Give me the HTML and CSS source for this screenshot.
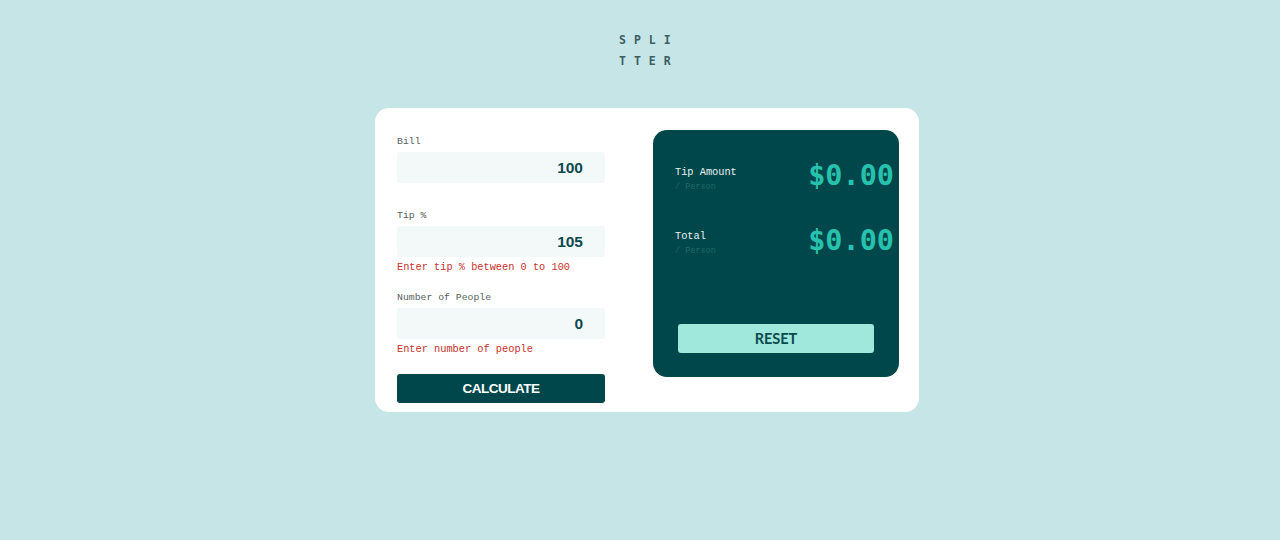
FILE: index.html
```html
<!DOCTYPE html>
<html lang="en">
<head>
<meta charset="utf-8">
<title>Splitter</title>
<link rel="stylesheet" href="styles.css">
</head>
<body>
<header class="header">
  <h1 class="logo">SPLITTER</h1>
</header>
<main class="main">
  <section class="card">
    <form class="inputs">
      <div class="field field-bill">
        <label class="label">Bill</label>
        <div class="input">100</div>
      </div>
      <div class="field field-tip">
        <label class="label">Tip %</label>
        <div class="input">105</div>
        <p class="error">Enter tip % between 0 to 100</p>
      </div>
      <div class="field field-people">
        <label class="label">Number of People</label>
        <div class="input">0</div>
        <p class="error">Enter number of people</p>
      </div>
      <button type="button" class="btn-calc">CALCULATE</button>
    </form>
    <div class="panel">
      <div class="row">
        <div class="row-label">
          <div class="row-title">Tip Amount</div>
          <div class="row-sub">/ Person</div>
        </div>
        <div class="amount">$0.00</div>
      </div>
      <div class="row row-total">
        <div class="row-label">
          <div class="row-title">Total</div>
          <div class="row-sub">/ Person</div>
        </div>
        <div class="amount">$0.00</div>
      </div>
      <button type="button" class="btn-reset">RESET</button>
    </div>
  </section>
</main>
</body>
</html>
```

FILE: styles.css
```css
* { box-sizing: border-box; }
html, body { margin: 0; padding: 0; }
body {
  background: #c5e5e6;
  width: 1280px;
  height: 540px;
  overflow: hidden;
  font-family: "Liberation Mono", "DejaVu Sans Mono", monospace;
}
.header {
  display: flex;
  justify-content: center;
  padding-top: 30px;
}
.logo {
  margin: 0;
  width: 86px;
  padding-left: 22px;
  font-family: "DejaVu Sans Mono", "Liberation Mono", monospace;
  font-weight: 700;
  font-size: 11.5px;
  line-height: 21px;
  letter-spacing: 8px;
  color: #3d5e61;
  word-break: break-all;
}
.main {
  display: flex;
  justify-content: center;
  padding-left: 14px;
  padding-top: 36px;
}
.card {
  width: 544px;
  height: 304px;
  background: #ffffff;
  border-radius: 14px;
  padding: 22px 20px 9px 22px;
  display: grid;
  grid-template-columns: 208px 246px;
  column-gap: 48px;
  align-items: start;
}
.inputs {
  margin: 0;
  padding-top: 4px;
  display: flex;
  flex-direction: column;
}
.field { display: flex; flex-direction: column; }
.field-tip { margin-top: 25px; }
.field-people { margin-top: 16px; }
.label {
  font-size: 9.8px;
  line-height: 16px;
  color: #555f60;
  margin-bottom: 2px;
}
.input {
  height: 31px;
  background: #f3f8f8;
  border-radius: 3px;
  text-align: right;
  padding-right: 22px;
  font-family: "Liberation Sans", Arial, sans-serif;
  font-weight: 700;
  font-size: 15.5px;
  line-height: 31px;
  color: #0d4a4e;
}
.error {
  margin: 3px 0 0;
  font-size: 10.3px;
  line-height: 14px;
  color: #c9302c;
}
.btn-calc {
  margin-top: 18px;
  height: 29px;
  width: 208px;
  border: 0;
  border-radius: 3px;
  background: #00474b;
  color: #ffffff;
  font-family: "Liberation Sans", Arial, sans-serif;
  font-weight: 700;
  font-size: 13.5px;
  letter-spacing: -0.5px;
  padding: 0;
}
.panel {
  height: 247px;
  background: #00474b;
  border-radius: 14px;
  padding: 30px 5px 0 22px;
  display: flex;
  flex-direction: column;
}
.row {
  display: flex;
  justify-content: space-between;
  align-items: flex-start;
}
.row-total { margin-top: 32px; }
.row-label { padding-top: 5px; }
.row-total .row-label { padding-top: 4px; }
.row-title {
  font-size: 10.3px;
  line-height: 14px;
  color: #e6f3f2;
}
.row-sub {
  font-size: 8.5px;
  line-height: 12px;
  color: #1d6b6a;
  margin-top: 2px;
}
.amount {
  font-family: "DejaVu Sans Mono", "Liberation Mono", monospace;
  font-weight: 700;
  font-size: 28.5px;
  line-height: 32px;
  color: #26c2ad;
}
.btn-reset {
  margin-top: 67px;
  margin-left: 3px;
  width: 196px;
  height: 29px;
  border: 0;
  border-radius: 3px;
  background: #9fe8db;
  color: #0d4a4e;
  font-family: Lato, "Liberation Sans", sans-serif;
  font-weight: 700;
  font-size: 14.5px;
  padding: 0;
}
```
